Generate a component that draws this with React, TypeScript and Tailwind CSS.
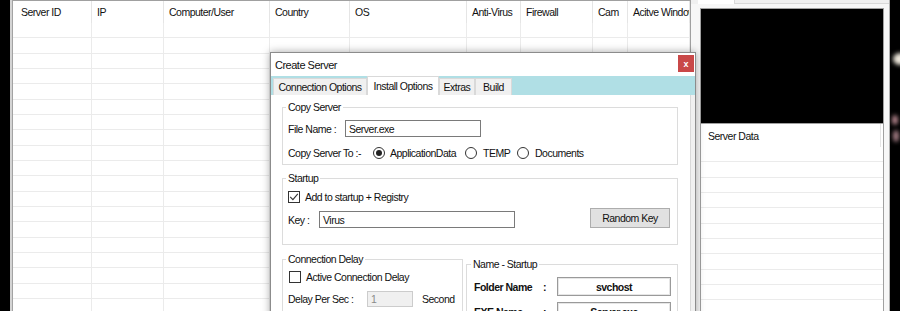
import React from 'react';

const cols: { name: string; w: number; first?: boolean }[] = [
  { name: 'Server ID', w: 79, first: true },
  { name: 'IP', w: 72 },
  { name: 'Computer/User', w: 106 },
  { name: 'Country', w: 80 },
  { name: 'OS', w: 117 },
  { name: 'Anti-Virus', w: 54 },
  { name: 'Firewall', w: 72 },
  { name: 'Cam', w: 35 },
  { name: 'Acitve Window', w: 62 },
];

const rows = Array.from({ length: 19 }, (_, i) => i);

function Radio({ checked }: { checked?: boolean }) {
  return (
    <span className="w-[12px] h-[12px] rounded-full border border-[#333333] bg-white flex items-center justify-center shrink-0">
      {checked && <span className="w-[6px] h-[6px] rounded-full bg-[#222222]" />}
    </span>
  );
}

function Check({ checked }: { checked?: boolean }) {
  return (
    <span className="w-[12px] h-[12px] border border-[#333333] bg-white flex items-center justify-center shrink-0">
      {checked && (
        <svg width="10" height="10" viewBox="0 0 10 10">
          <path d="M1.2 4.8 L3.9 7.6 L8.8 1.8" fill="none" stroke="#333333" strokeWidth="1.1" />
        </svg>
      )}
    </span>
  );
}

function Tab({ label, w, selected }: { label: string; w: number; selected?: boolean }) {
  return (
    <div
      style={{ width: w }}
      className={
        selected
          ? 'h-[19px] bg-white border border-b-0 border-[#d9d9d9] flex items-start justify-center pt-[3px]'
          : 'h-[17px] bg-[#f0f0f0] border border-b-0 border-[#d9d9d9] flex items-center justify-center'
      }
    >
      {label}
    </div>
  );
}

export default function App() {
  return (
    <div className="relative w-[900px] h-[311px] overflow-hidden flex bg-black text-[10.5px] tracking-[-0.5px] leading-[12px] text-[#111111] font-['Liberation_Sans',Arial,sans-serif]">
      {/* left edge */}
      <div className="w-[10px] h-full bg-black shrink-0" />
      <div className="w-[2px] h-full bg-[#d4d4d4] shrink-0" />
      <div className="w-[1px] h-full bg-[#a3a3a3] shrink-0" />

      {/* main grid */}
      <div className="w-[678px] h-full bg-white border-t border-r border-[#a0a0a0] flex flex-col shrink-0 overflow-hidden">
        <div className="h-[22px] flex shrink-0">
          {cols.map((c) => (
            <div
              key={c.name}
              style={{ width: c.w }}
              className={`h-full flex items-center whitespace-nowrap overflow-hidden border-r border-[#e5e5e5] shrink-0 ${c.first ? 'pl-[8px]' : 'pl-[5px]'}`}
            >
              {c.name}
            </div>
          ))}
        </div>
        {rows.map((r) => (
          <div key={r} className="h-[15.33px] flex shrink-0 border-b border-[#ebebeb]">
            {cols.map((c) => (
              <div key={c.name} style={{ width: c.w }} className="h-full border-r border-[#ebebeb] shrink-0" />
            ))}
          </div>
        ))}
      </div>

      {/* right panel */}
      <div className="w-[199px] h-full bg-[#f0f0f0] border-r border-[#b4b4b4] flex flex-col shrink-0">
        <div className="h-[4px] flex shrink-0">
          <div className="w-[7px]" />
          <div className="w-[37px] bg-white border-r border-[#d9d9d9]" />
          <div className="flex-1 border-b border-[#d9d9d9]" />
        </div>
        <div className="flex-1 flex flex-col pl-[9px] pr-[5px] pt-[4px] bg-[#f7f7f7]">
          <div className="h-[116px] bg-black border border-[#a0a0a0] shrink-0" />
          <div className="flex-1 bg-white border-x border-[#a0a0a0] flex flex-col overflow-hidden">
            <div className="h-[23px] flex items-center pl-[7px] border-r border-[#e5e5e5] mr-[2px] shrink-0">Server Data</div>
            {rows.map((r) => (
              <div key={r} className="h-[15.33px] border-b border-[#ebebeb] shrink-0" />
            ))}
          </div>
        </div>
      </div>

      {/* wallpaper strip */}
      <svg width="11" height="311" viewBox="0 0 11 311" className="shrink-0">
        <defs>
          <filter id="b" x="-2" y="-2" width="5" height="5">
            <feGaussianBlur stdDeviation="2.2" />
          </filter>
        </defs>
        <rect width="11" height="311" fill="#000" />
        <ellipse cx="10" cy="59" rx="7" ry="6" fill="#ece6da" filter="url(#b)" />
        <ellipse cx="5" cy="120" rx="3" ry="5" fill="#b88890" filter="url(#b)" />
        <ellipse cx="6" cy="136" rx="3" ry="6" fill="#a88088" filter="url(#b)" />
      </svg>

      {/* Create Server dialog */}
      <div className="absolute left-[270px] top-[52px] w-[426px] h-[270px] bg-[#f0f0f0] border border-[#8c8c8c] shadow-[0_0_8px_rgba(0,0,0,0.35)] flex flex-col">
        <div className="h-[23px] bg-white flex items-start justify-between shrink-0">
          <span className="pl-[4px] pt-[6px] text-[11px]">Create Server</span>
          <div className="mt-[2px] mr-[1px] w-[16px] h-[17px] bg-[#c94848] text-white text-[9px] font-bold flex items-center justify-center tracking-normal">x</div>
        </div>
        <div className="h-[19px] bg-[#b0dfe5] flex items-end pl-[2px] shrink-0">
          <Tab label="Connection Options" w={94} />
          <Tab label="Install Options" w={72} selected />
          <Tab label="Extras" w={36} />
          <Tab label="Build" w={37} />
        </div>
        <div className="flex-1 w-[420px] bg-white border-r border-[#d9d9d9] pl-[11px] flex flex-col">
          {/* Copy Server */}
          <fieldset className="w-[396px] mt-[6px] border border-[#dcdcdc] p-0">
            <legend className="ml-[3px] px-[2px]">Copy Server</legend>
            <div className="pl-[5px] pb-[4px]">
              <div className="flex items-center mt-[7px]">
                <span className="w-[57px]">File Name :</span>
                <div className="w-[136px] h-[17px] border border-[#7a7a7a] flex items-center pl-[3px]">Server.exe</div>
              </div>
              <div className="flex items-center mt-[9px] h-[14px]">
                <span className="w-[85px]">Copy Server To :-</span>
                <div className="w-[92px] flex items-center gap-[5px]">
                  <Radio checked />
                  <span>ApplicationData</span>
                </div>
                <div className="w-[52px] flex items-center gap-[6px]">
                  <Radio />
                  <span>TEMP</span>
                </div>
                <div className="flex items-center gap-[6px]">
                  <Radio />
                  <span>Documents</span>
                </div>
              </div>
            </div>
          </fieldset>

          {/* Startup */}
          <fieldset className="w-[396px] mt-[7px] border border-[#dcdcdc] p-0">
            <legend className="ml-[3px] px-[2px]">Startup</legend>
            <div className="pl-[5px] pb-[16px]">
              <div className="flex items-center mt-[6px] h-[14px] gap-[5px]">
                <Check checked />
                <span>Add to startup + Registry</span>
              </div>
              <div className="flex items-end mt-[4px]">
                <span className="w-[31px] h-[17px] flex items-center">Key :</span>
                <div className="w-[196px] h-[17px] border border-[#7a7a7a] flex items-center pl-[3px]">Virus</div>
                <div className="ml-[75px] w-[80px] h-[20px] bg-[#e1e1e1] border border-[#adadad] flex items-center justify-center">Random Key</div>
              </div>
            </div>
          </fieldset>

          <div className="flex items-start">
            {/* Connection Delay */}
            <fieldset className="w-[181px] mt-[8px] border border-[#dcdcdc] p-0 h-[80px]">
              <legend className="ml-[3px] px-[2px]">Connection Delay</legend>
              <div className="pl-[5px]">
                <div className="flex items-center mt-[5px] h-[14px] gap-[5px] pl-[1px]">
                  <Check />
                  <span>Active Connection Delay</span>
                </div>
                <div className="flex items-center mt-[7px]">
                  <span className="w-[79px]">Delay Per Sec :</span>
                  <div className="w-[46px] h-[16px] border border-[#cccccc] bg-[#f0f0f0] text-[#8a8a8a] flex items-center pl-[3px]">1</div>
                  <span className="ml-[9px]">Second</span>
                </div>
              </div>
            </fieldset>

            {/* Name - Startup */}
            <fieldset className="w-[212px] ml-[3px] mt-[13px] border border-[#dcdcdc] p-0 h-[80px]">
              <legend className="ml-[4px] px-[2px]">Name - Startup</legend>
              <div className="pl-[7px]">
                <div className="flex items-center mt-[7px] font-bold">
                  <span className="w-[69px]">Folder Name</span>
                  <span className="w-[14px]">:</span>
                  <div className="w-[114px] h-[19px] border border-[#9a9a9a] shadow-[inset_0_0_0_1px_#e6e6e6] flex items-center justify-center">svchost</div>
                </div>
                <div className="flex items-center mt-[6px] font-bold">
                  <span className="w-[69px]">EXE Name</span>
                  <span className="w-[14px]">:</span>
                  <div className="w-[114px] h-[19px] border border-[#9a9a9a] shadow-[inset_0_0_0_1px_#e6e6e6] flex items-center justify-center">Server.exe</div>
                </div>
              </div>
            </fieldset>
          </div>
        </div>
      </div>
    </div>
  );
}
